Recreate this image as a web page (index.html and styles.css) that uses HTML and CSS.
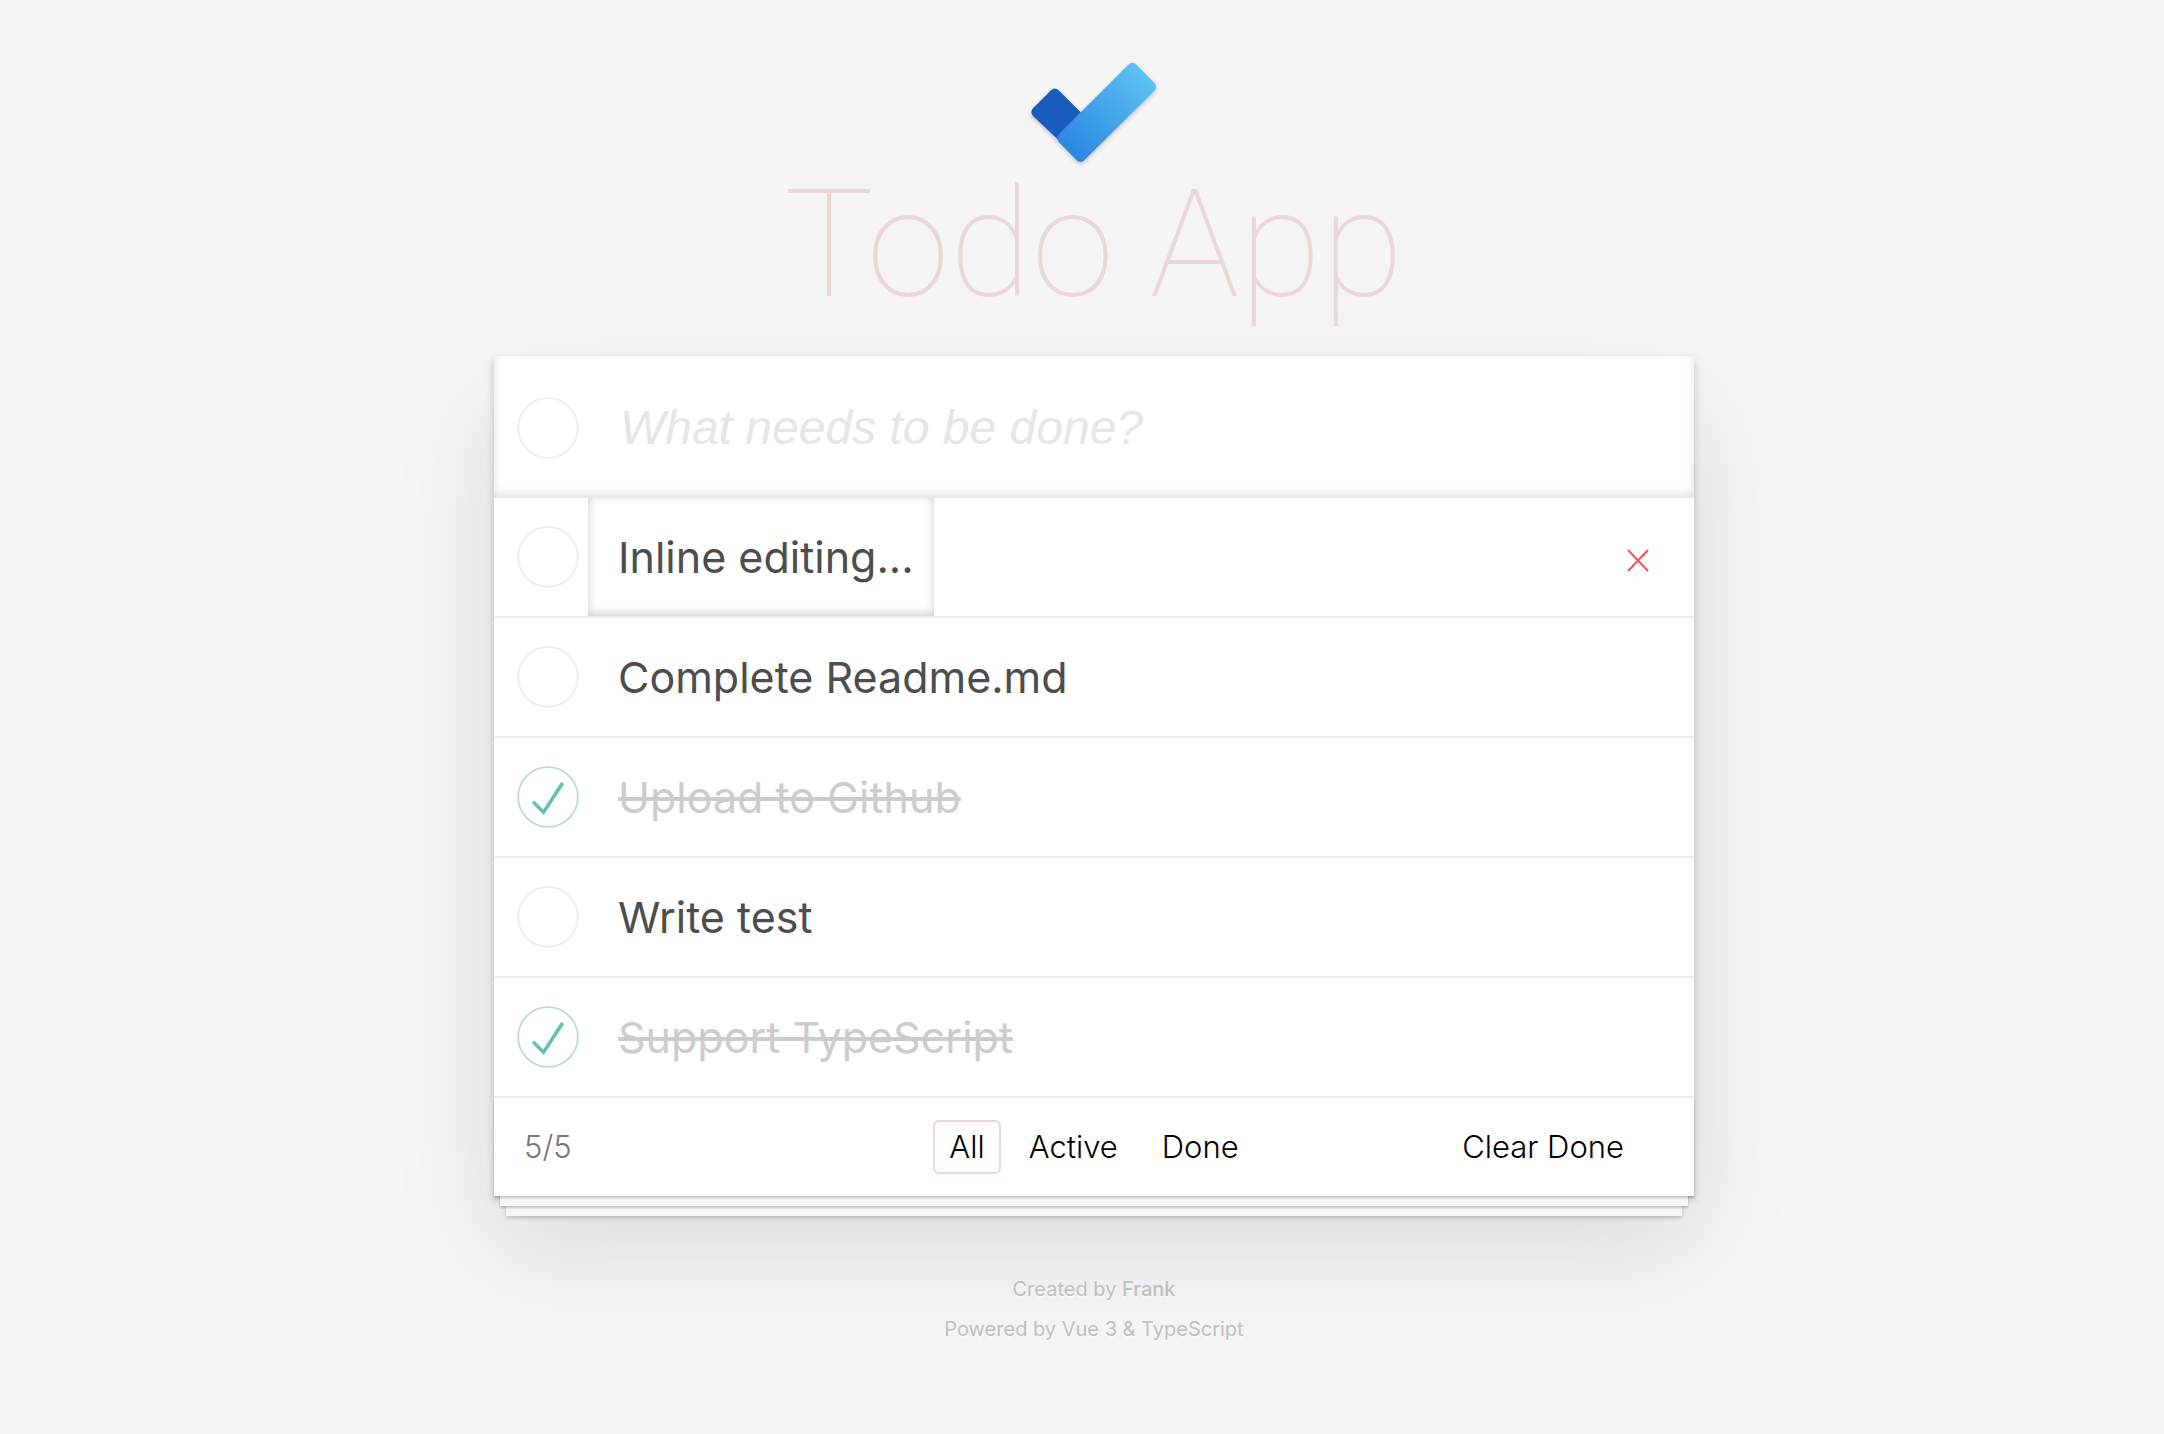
FILE: index.html
```html
<!DOCTYPE html>
<html lang="en">
<head>
<meta charset="utf-8">
<meta name="viewport" content="width=device-width, initial-scale=1">
<title>Todo App</title>
<link rel="stylesheet" href="styles.css">
</head>
<body>
<header class="masthead">
  <svg class="logo" viewBox="52 60 402 330" aria-hidden="true">
    <defs>
      <linearGradient id="bar" gradientUnits="userSpaceOnUse" x1="176" y1="331" x2="405" y2="102">
        <stop offset="0" stop-color="#2b87e3"/>
        <stop offset="1" stop-color="#5cc1f3"/>
      </linearGradient>
    </defs>
    <path fill="#185dbc" d="M70 205L124 151Q135 140 147 151L225 229L150 304L70 228Q60 216 70 205Z"/>
    <path fill="url(#bar)" d="M148 282L356 74Q368 63 380 74L434 128Q445 140 434 152L224 361Q212 371 201 361L148 307Q138 295 148 282Z"/>
  </svg>
  <h1 class="title">Todo App</h1>
</header>
<main class="card">
  <form class="new-todo">
    <input class="toggle" type="checkbox" aria-label="Toggle all">
    <input class="new-input" type="text" placeholder="What needs to be done?" aria-label="New todo">
  </form>
  <ul class="list">
    <li class="item">
      <input class="toggle" type="checkbox" aria-label="Inline editing...">
      <input class="edit" type="text" value="Inline editing..." aria-label="Edit todo">
      <button class="remove" type="button" aria-label="Delete">
        <svg viewBox="0 0 24 24" width="24" height="24" aria-hidden="true"><path d="M2 1L22 22M22 1L2 22" stroke="#ff4d58" stroke-width="2" fill="none"/></svg>
      </button>
    </li>
    <li class="item">
      <input class="toggle" type="checkbox" id="t2">
      <label class="text" for="t2">Complete Readme.md</label>
    </li>
    <li class="item">
      <input class="toggle" type="checkbox" id="t3" checked>
      <label class="text" for="t3">Upload to Github</label>
    </li>
    <li class="item">
      <input class="toggle" type="checkbox" id="t4">
      <label class="text" for="t4">Write test</label>
    </li>
    <li class="item">
      <input class="toggle" type="checkbox" id="t5" checked>
      <label class="text" for="t5">Support TypeScript</label>
    </li>
  </ul>
  <div class="bar">
    <span class="count">5/5</span>
    <nav class="filters">
      <a class="filter selected" href="#all">All</a>
      <a class="filter" href="#active">Active</a>
      <a class="filter" href="#done">Done</a>
    </nav>
    <button class="clear" type="button">Clear Done</button>
  </div>
</main>
<footer class="info">
  <p>Created by <a href="#frank">Frank</a></p>
  <p>Powered by Vue 3 &amp; TypeScript</p>
</footer>
</body>
</html>
```
FILE: styles.css
```css
* {
  box-sizing: border-box;
}

body {
  margin: 0;
  padding: 60px 0 0 24px;
  background: #f5f5f5;
  color: #4d4d4d;
  font-family: Inter, "Liberation Sans", sans-serif;
  font-weight: 300;
}

input,
button {
  margin: 0;
  padding: 0;
  border: 0;
  background: none;
  font: inherit;
  color: inherit;
}

.masthead {
  display: flex;
  flex-direction: column;
  align-items: center;
}

.logo {
  width: 134px;
  height: 110px;
  overflow: visible;
  filter: drop-shadow(0 2px 2px rgba(0, 0, 0, 0.2));
}

.title {
  margin: 0;
  height: 186px;
  color: #ead7d7;
  font-family: Roboto, Inter, sans-serif;
  font-size: 150px;
  line-height: 150px;
  font-weight: 100;
}

.card {
  max-width: 1200px;
  margin: 0 auto;
  background: #fff;
  box-shadow: 0 4px 8px rgba(0, 0, 0, 0.2), 0 50px 100px rgba(0, 0, 0, 0.1);
}

.new-todo {
  display: flex;
  align-items: center;
  gap: 9px;
  height: 142px;
  padding: 2px 0 0 23px;
  box-shadow: inset 0 -4px 10px rgba(0, 0, 0, 0.12);
}

.new-input {
  flex: 1;
  padding: 0 32px;
  outline: 0;
  font: italic 400 48px/58px "Liberation Sans", Arial, sans-serif;
}

.new-input::placeholder {
  color: #e6e6e6;
  opacity: 1;
}

.toggle {
  appearance: none;
  flex: none;
  width: 62px;
  height: 62px;
  background: url("data:image/svg+xml,%3Csvg xmlns='http://www.w3.org/2000/svg' viewBox='-2 -2 104 104'%3E%3Ccircle cx='50' cy='50' r='50' fill='none' stroke='%23ededed' stroke-width='3'/%3E%3C/svg%3E") center / contain no-repeat;
}

.toggle:checked {
  background-image: url("data:image/svg+xml,%3Csvg xmlns='http://www.w3.org/2000/svg' viewBox='-2 -2 104 104'%3E%3Ccircle cx='50' cy='50' r='50' fill='none' stroke='%23bddad5' stroke-width='3'/%3E%3Cpath fill='%235dc2af' d='M72 25L42 71 27 56l-4 4 20 20 34-52z'/%3E%3C/svg%3E");
}

.list {
  margin: 0;
  padding: 0;
  list-style: none;
}

.item {
  display: flex;
  align-items: center;
  gap: 9px;
  height: 120px;
  padding: 0 40px 0 23px;
  border-bottom: 2px solid #ededed;
  font-size: 43px;
  line-height: 58px;
  font-weight: 400;
}

.text {
  padding: 0 30px;
}

.toggle:checked + .text {
  color: #cccccc;
  text-decoration: line-through;
}

.edit {
  width: 346px;
  height: 118px;
  padding: 0 10px 0 30px;
  outline: 0;
  box-shadow: inset 0 -2px 10px rgba(0, 0, 0, 0.2);
}

.remove {
  display: grid;
  place-items: center;
  width: 32px;
  height: 32px;
  margin: 8px 0 0 auto;
}

.bar {
  display: grid;
  grid-template-columns: 1fr auto 1fr;
  align-items: center;
  height: 98px;
  padding: 0 30px;
  font-size: 31px;
  line-height: 50px;
  box-shadow:
    0 2px 2px rgba(0, 0, 0, 0.2),
    0 16px 0 -6px #f6f6f6,
    0 18px 2px -6px rgba(0, 0, 0, 0.2),
    0 32px 0 -12px #f6f6f6,
    0 34px 4px -12px rgba(0, 0, 0, 0.2);
}

.count {
  color: #777;
}

.filters {
  display: flex;
  gap: 12px;
}

.filter {
  padding: 0 14px;
  border: 2px solid transparent;
  border-radius: 6px;
  color: #000;
  text-decoration: none;
}

.filter.selected {
  border-color: #efd5d5;
}

.clear {
  justify-self: end;
  margin-right: 40px;
  color: #000;
}

.info {
  margin-top: 73px;
  color: #bfbfbf;
  font-size: 20px;
  line-height: 40px;
  font-weight: 400;
  text-align: center;
  text-shadow: 0 2px 0 rgba(255, 255, 255, 0.5);
}

.info p {
  margin: 0;
}

.info a {
  color: inherit;
  font-weight: 500;
  text-decoration: none;
}
```
